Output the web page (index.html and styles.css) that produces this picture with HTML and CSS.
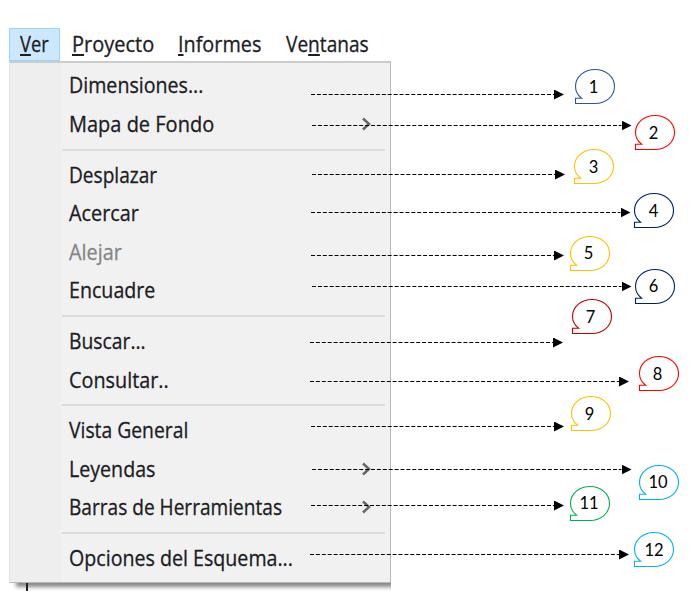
FILE: index.html
```html
<!DOCTYPE html>
<html lang="es">
<head>
<meta charset="utf-8">
<title>Menú Ver</title>
<link rel="stylesheet" href="styles.css">
</head>
<body>
<nav class="menubar">
  <div class="tab active"><span class="label narrowest"><u>V</u>er</span></div>
  <div class="tab proyecto"><span class="label widest"><u>P</u>royecto</span></div>
  <div class="tab informes"><span class="label wider"><u>I</u>nformes</span></div>
  <div class="tab ventanas"><span class="label narrow">Ve<u>n</u>tanas</span></div>
</nav>
<div class="menu-clip">
<div class="menu">
  <div class="item"><span class="label wide">Dimensiones...</span></div>
  <div class="item"><span class="label widest">Mapa de Fondo</span><svg class="chevron" viewBox="0 0 9 14"><path d="M1 1.5 7 7 1 12.5"/></svg></div>
  <hr>
  <div class="item"><span class="label narrow">Desplazar</span></div>
  <div class="item"><span class="label wider">Acercar</span></div>
  <div class="item disabled"><span class="label wider">Alejar</span></div>
  <div class="item"><span class="label wide">Encuadre</span></div>
  <hr>
  <div class="item"><span class="label">Buscar...</span></div>
  <div class="item"><span class="label wider">Consultar..</span></div>
  <hr>
  <div class="item"><span class="label">Vista General</span></div>
  <div class="item"><span class="label wide">Leyendas</span><svg class="chevron" viewBox="0 0 9 14"><path d="M1 1.5 7 7 1 12.5"/></svg></div>
  <div class="item"><span class="label narrow">Barras de Herramientas</span><svg class="chevron" viewBox="0 0 9 14"><path d="M1 1.5 7 7 1 12.5"/></svg></div>
  <hr>
  <div class="item"><span class="label wide">Opciones del Esquema...</span></div>
</div>
</div>
<div class="stem"></div>
<svg class="callouts" width="690" height="595" viewBox="0 0 690 595">
  <defs>
    <marker id="head" markerUnits="userSpaceOnUse" markerWidth="10" markerHeight="10" refX="0" refY="5" orient="auto"><path d="M0 0 10 5 0 10Z"/></marker>
    <path id="bubble" d="M.5 34.5V29.3H6.6C2.5 26 .5 22 .5 17.5C.5 8 9 .5 20 .5S39.5 8 39.5 17.5S31 34.5 20 34.5Z"/>
  </defs>
  <g class="arrows">
    <path d="M311 94.5H554"/><path d="M312 125.5H621.5"/><path d="M312 174.5H555"/>
    <path d="M311 212.5H620.5"/><path d="M311 255.5H554"/><path d="M312 286.5H621.5"/>
    <path d="M310 342.5H553"/><path d="M310 381.5H619"/><path d="M311 426.5H554"/>
    <path d="M312 469.5H621.5"/><path d="M311 505.5H554"/><path d="M310 554.5H619"/>
  </g>
  <g class="bubbles">
    <use href="#bubble" x="575" y="69" stroke="#2f5597"/>
    <use href="#bubble" x="635" y="115" stroke="#ff0000"/>
    <use href="#bubble" x="574" y="149" stroke="#ffc000"/>
    <use href="#bubble" x="634" y="193" stroke="#002060"/>
    <use href="#bubble" x="570" y="236" stroke="#ffc000"/>
    <use href="#bubble" x="635" y="269" stroke="#002060"/>
    <use href="#bubble" x="572" y="299" stroke="#c00000"/>
    <use href="#bubble" x="639" y="356" stroke="#ff0000"/>
    <use href="#bubble" x="571" y="396" stroke="#ffc000"/>
    <use href="#bubble" x="639" y="465" stroke="#00b0f0"/>
    <use href="#bubble" x="570" y="486" stroke="#00b050"/>
    <use href="#bubble" x="634" y="532" stroke="#00b0f0"/>
  </g>
  <g class="numbers">
    <text x="593.5" y="92.5">1</text><text x="653.5" y="138.5">2</text>
    <text x="593.5" y="172.5">3</text><text x="653.5" y="216.5">4</text>
    <text x="588.5" y="258.5">5</text><text x="653.5" y="291.5">6</text>
    <text x="590.5" y="322.5">7</text><text x="657.5" y="379.5">8</text>
    <text x="589.5" y="419.5">9</text><text x="658" y="487.5">10</text>
    <text x="589" y="508.5">11</text><text x="654" y="555.5">12</text>
  </g>
</svg>
</body>
</html>
```
FILE: styles.css
```css
* { box-sizing: border-box; }
body {
  margin: 0;
  width: 690px;
  height: 595px;
  padding: 28px 0 0 9px;
  overflow: hidden;
  background: #fff;
  color: #1c1c24;
  font: 21.5px/1 "Open Sans", sans-serif;
}
.menubar { display: flex; height: 33px; }
.tab { display: flex; align-items: center; padding-left: 11px; white-space: nowrap; }
.active { width: 51px; background: #cce8ff; border: 1px solid #99d1ff; padding-left: 10px; }
.proyecto { width: 107px; padding-left: 12px; }
.informes { width: 108px; }
.label {
  display: inline-block;
  padding-bottom: 1.5px;
  transform: scaleX(.898);
  transform-origin: left;
  white-space: nowrap;
  -webkit-text-stroke: .3px currentColor;
}
.narrowest { transform: scaleX(.85); }
.narrow { transform: scaleX(.888); }
.wide { transform: scaleX(.913); }
.wider { transform: scaleX(.922); }
.widest { transform: scaleX(.93); }
u { text-decoration-thickness: 2px; text-underline-offset: 2px; }
.menu-clip { width: 382px; height: 532px; overflow: hidden; }
.menu {
  width: 382px;
  height: 522px;
  padding: 3.7px 5px 0 52px;
  border: 1px solid #b8b8b8;
  border-top: 2px solid #ccc;
  border-left: 1px solid #e2e2e2;
  background: linear-gradient(90deg, #eee 51px, #f1f1f1 51px);
  box-shadow: 8px 3px 4px 1px #888;
}
.item { display: flex; align-items: center; justify-content: space-between; height: 38.6px; padding: 0 14px 0 7px; }
.disabled { color: #858589; }
hr { height: 12px; margin: 0; border: 0; background: linear-gradient(#dcdcdc, #dcdcdc) center / 100% 2px no-repeat; }
.chevron { width: 9px; height: 14px; margin-bottom: 1px; fill: none; stroke: #666; stroke-width: 2.5; }
.stem { width: 2px; height: 8px; margin: -10px 0 0 17px; background: #222; position: relative; }
.callouts { position: absolute; top: 0; left: 0; }
.arrows path { fill: none; stroke: #000; stroke-width: 1; stroke-dasharray: 4 1.9; marker-end: url(#head); }
.arrows path, marker path { stroke-linejoin: miter; }
marker path { fill: #000; }
.bubbles { fill: #fff; stroke-width: 1.1; }
.numbers { font: 16.5px Lato, sans-serif; fill: #000; text-anchor: middle; }
```
